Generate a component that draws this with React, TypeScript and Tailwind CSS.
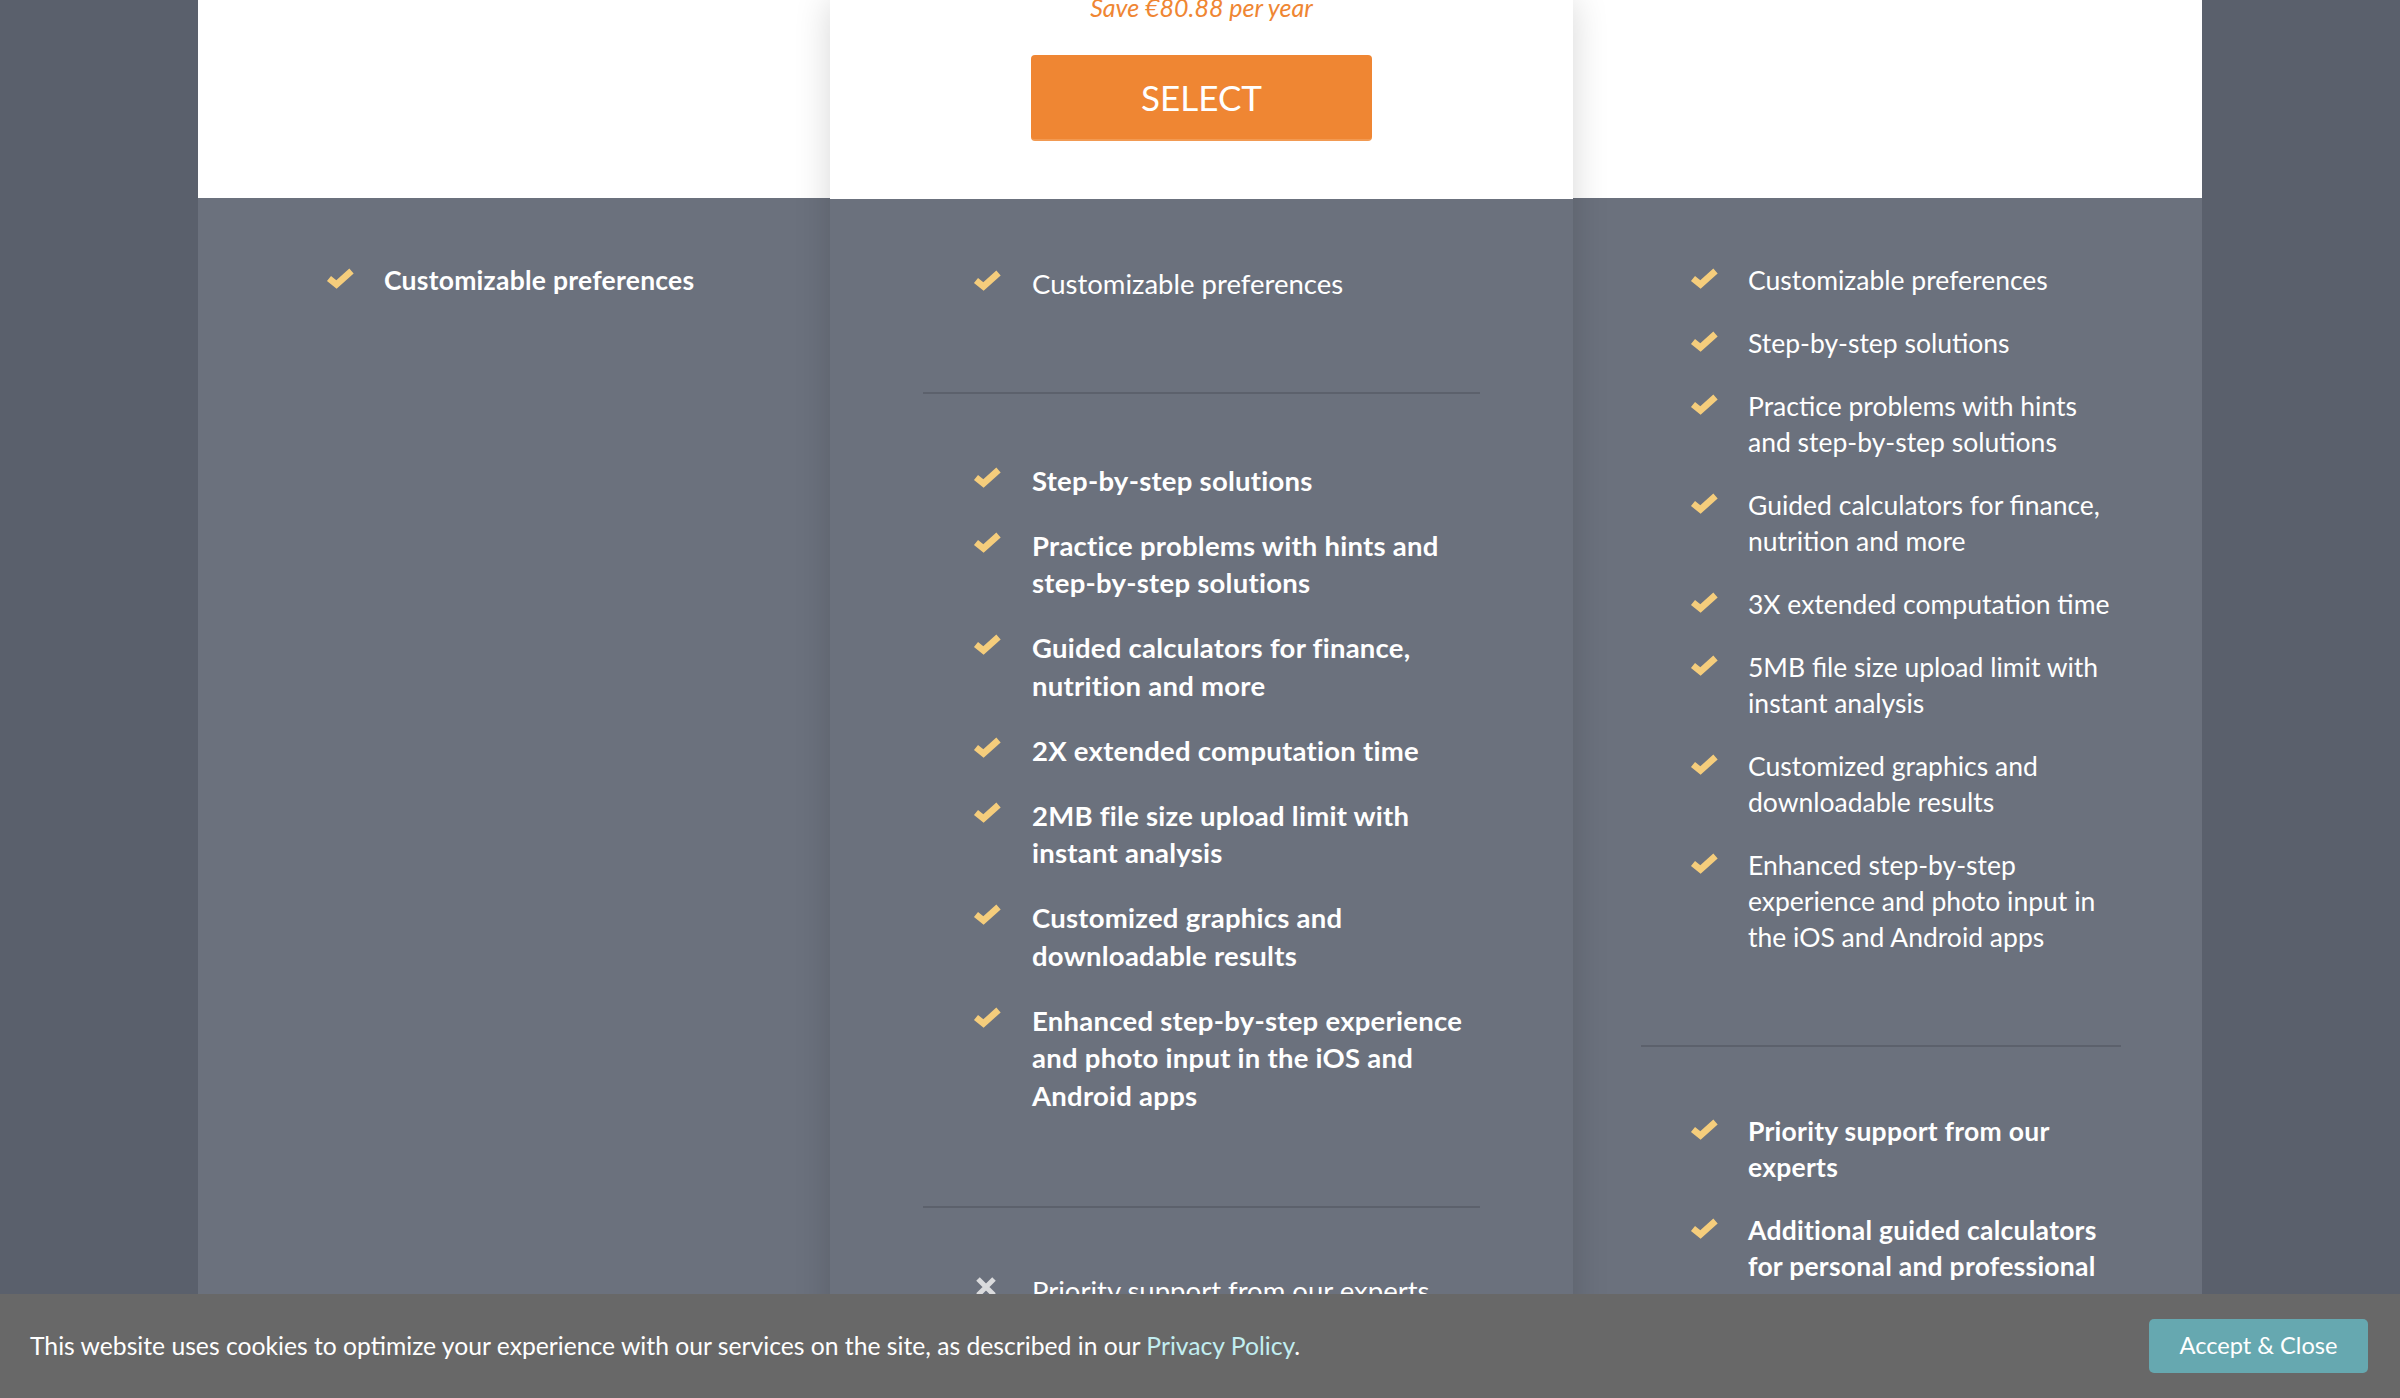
import React from 'react';

const font = { fontFamily: 'Lato, "Open Sans", sans-serif' };

function CheckMark() {
  return (
    <svg viewBox="0 0 28 22" className="h-[22px] w-[28px] shrink-0" aria-hidden="true">
      <polyline
        points="3,11.5 10.5,17.5 25.5,4"
        fill="none"
        stroke="#f5cd7c"
        strokeWidth="6.5"
        strokeLinejoin="miter"
        strokeLinecap="butt"
      />
    </svg>
  );
}

function CrossMark() {
  return (
    <svg viewBox="0 0 28 22" className="h-[22px] w-[28px] shrink-0" aria-hidden="true">
      <path d="M5 3 L21 19 M21 3 L5 19" stroke="#dadbdd" strokeWidth="5" fill="none" />
    </svg>
  );
}

type Item = { lines: string[]; bold?: boolean; cross?: boolean };

function FeatureList({
  items,
  size,
}: {
  items: Item[];
  size: 'lg' | 'md';
}) {
  return (
    <ul className={size === 'lg' ? 'flex flex-col gap-[27.5px]' : 'flex flex-col gap-[27px]'}>
      {items.map((item) => (
        <li key={item.lines.join(' ')} className="flex items-start">
          <span className={size === 'lg' ? 'mt-[4px]' : 'mt-[5px]'}>
            {item.cross ? <CrossMark /> : <CheckMark />}
          </span>
          <span
            className={`whitespace-nowrap text-white ${
              size === 'lg' ? 'ml-[31px] text-[27.5px] leading-[37.5px]' : 'ml-[30px] text-[26.5px] leading-[36px]'
            } ${item.bold ? 'font-bold tracking-[0.25px]' : 'font-normal'}`}
          >
            {item.lines.map((line, i) => (
              <React.Fragment key={line}>
                {i > 0 && <br />}
                {line}
              </React.Fragment>
            ))}
          </span>
        </li>
      ))}
    </ul>
  );
}

const middleCore: Item[] = [
  { lines: ['Step-by-step solutions'], bold: true },
  { lines: ['Practice problems with hints and', 'step-by-step solutions'], bold: true },
  { lines: ['Guided calculators for finance,', 'nutrition and more'], bold: true },
  { lines: ['2X extended computation time'], bold: true },
  { lines: ['2MB file size upload limit with', 'instant analysis'], bold: true },
  { lines: ['Customized graphics and', 'downloadable results'], bold: true },
  { lines: ['Enhanced step-by-step experience', 'and photo input in the iOS and', 'Android apps'], bold: true },
];

const rightCore: Item[] = [
  { lines: ['Customizable preferences'] },
  { lines: ['Step-by-step solutions'] },
  { lines: ['Practice problems with hints', 'and step-by-step solutions'] },
  { lines: ['Guided calculators for finance,', 'nutrition and more'] },
  { lines: ['3X extended computation time'] },
  { lines: ['5MB file size upload limit with', 'instant analysis'] },
  { lines: ['Customized graphics and', 'downloadable results'] },
  { lines: ['Enhanced step-by-step', 'experience and photo input in', 'the iOS and Android apps'] },
];

const rightExtra: Item[] = [
  { lines: ['Priority support from our', 'experts'], bold: true },
  { lines: ['Additional guided calculators', 'for personal and professional', 'use'], bold: true },
];

export default function App() {
  return (
    <div className="relative h-[1398px] w-full overflow-hidden bg-[#5a606c]" style={font}>
      <div className="mx-auto flex w-[2004px] items-stretch">
        {/* basic */}
        <div className="flex h-[1398px] w-[632px] flex-col bg-[#6b717d]">
          <div className="h-[198px] bg-white" />
          <div className="pl-[128px] pt-[64px]">
            <FeatureList size="md" items={[{ lines: ['Customizable preferences'], bold: true }]} />
          </div>
        </div>

        {/* pro, highlighted */}
        <div className="relative z-10 flex h-[1398px] w-[743px] flex-col bg-[#6b717d] shadow-[0_0_34px_rgba(0,0,0,0.16)]">
          <div className="flex h-[199px] flex-col items-center overflow-hidden bg-white">
            <p className="-mt-[8px] text-[25px] italic leading-[30px] text-[#ef8633]">Save €80.88 per year</p>
            <button className="mt-[33px] h-[86px] w-[341px] rounded-[4px] border-b-2 border-[#f29a52] bg-[#ef8633] text-[35px] uppercase leading-none text-white">
              Select
            </button>
          </div>
          <div className="pl-[143px] pt-[66px]">
            <FeatureList size="lg" items={[{ lines: ['Customizable preferences'] }]} />
          </div>
          <div className="ml-[93px] mt-[89px] h-[2px] w-[557px] bg-[#5c616c]" />
          <div className="pl-[143px] pt-[68px]">
            <FeatureList size="lg" items={middleCore} />
          </div>
          <div className="ml-[93px] mt-[92px] h-[2px] w-[557px] bg-[#5c616c]" />
          <div className="pl-[143px] pt-[64px]">
            <FeatureList size="lg" items={[{ lines: ['Priority support from our experts'], cross: true }]} />
          </div>
        </div>

        {/* premium */}
        <div className="flex h-[1398px] w-[629px] flex-col bg-[#6b717d]">
          <div className="h-[198px] bg-white" />
          <div className="pl-[117px] pt-[64px]">
            <FeatureList size="md" items={rightCore} />
          </div>
          <div className="ml-[68px] mt-[90px] h-[2px] w-[480px] bg-[#5c616c]" />
          <div className="pl-[117px] pt-[66px]">
            <FeatureList size="md" items={rightExtra} />
          </div>
        </div>
      </div>

      {/* cookie notice */}
      <div className="absolute inset-x-0 bottom-0 z-20 flex h-[104px] items-center justify-between bg-[#686868] pl-[30px] pr-[32px]">
        <p className="text-[24.7px] leading-none text-white">
          This website uses cookies to optimize your experience with our services on the site, as described in our{' '}
          <span className="text-[#c2eef1]">Privacy Policy</span>.
        </p>
        <button className="h-[54px] w-[219px] rounded-[5px] bg-[#66a8b0] text-[23.6px] text-white">Accept &amp; Close</button>
      </div>
    </div>
  );
}
